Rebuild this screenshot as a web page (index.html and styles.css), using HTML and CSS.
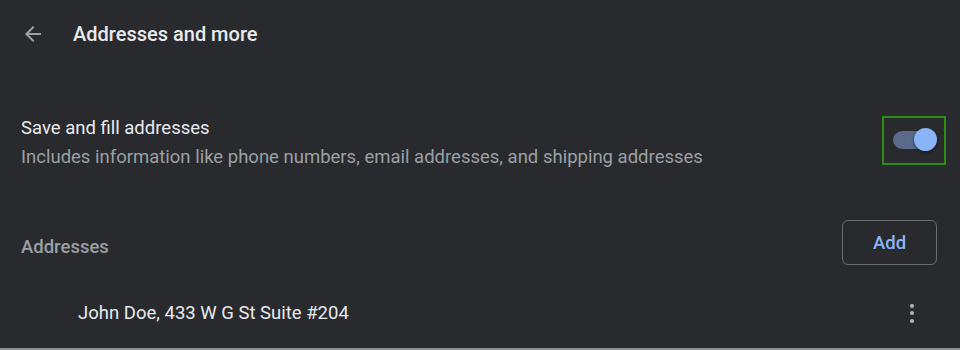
FILE: index.html
```html
<html><head><title>Addresses and more</title>
<link rel="stylesheet" href="styles.css">
</head>
<body>
  <div class="page">
    <div class="header">
      <div class="back-btn">
        <svg width="24" height="24" viewBox="0 0 24 24"><path d="M20 11H7.83l5.59-5.59L12 4l-8 8 8 8 1.41-1.41L7.83 13H20v-2z" fill="#9aa0a6"/></svg>
      </div>
      <h1>Addresses and more</h1>
    </div>

    <div class="setting-row">
      <div class="setting-text">
        <div class="setting-label">Save and fill addresses</div>
        <div class="setting-sub">Includes information like phone numbers, email addresses, and shipping addresses</div>
      </div>
      <div class="toggle-focus">
        <div class="toggle">
          <div class="toggle-bar"></div>
          <div class="toggle-knob"></div>
        </div>
      </div>
    </div>

    <div class="section-head">
      <h2>Addresses</h2>
      <button class="add-btn">Add</button>
    </div>

    <div class="address-row">
      <div class="address-text">John Doe, 433 W G St Suite #204</div>
      <div class="more-btn">
        <span class="dot"></span>
        <span class="dot"></span>
        <span class="dot"></span>
      </div>
    </div>
  </div>
  <div class="bottom-edge"></div>
</body>
</html>
```

FILE: styles.css
```css
  body, html {
    margin: 0;
    padding: 0;
    font-family: Roboto, 'Liberation Sans', sans-serif;
    background: #292a2d;
    color: #e8eaed;
    height: 100%;
    overflow: hidden;
  }
  .page {
    height: 348px;
    display: flex;
    flex-direction: column;
  }
  .header {
    display: flex;
    align-items: center;
    height: 68px;
    padding-left: 21px;
  }
  .back-btn {
    width: 24px;
    height: 24px;
    margin-right: 28px;
  }
  .back-btn svg {
    display: block;
  }
  h1 {
    margin: 0;
    font-size: 20px;
    font-weight: 500;
    color: #e8eaed;
  }
  .setting-row {
    display: flex;
    align-items: center;
    justify-content: space-between;
    margin-top: 47px;
    padding: 0 14px 0 21px;
  }
  .setting-label {
    font-size: 18.5px;
    line-height: 26px;
  }
  .setting-sub {
    font-size: 18.5px;
    line-height: 26px;
    color: #9aa0a6;
    margin-top: 3px;
  }
  .toggle-focus {
    width: 60px;
    height: 45px;
    border: 2px solid #2e8b14;
    display: flex;
    align-items: center;
    justify-content: center;
    margin-top: -4px;
  }
  .toggle {
    position: relative;
    width: 46px;
    height: 24px;
  }
  .toggle-bar {
    position: absolute;
    left: 2px;
    top: 2px;
    width: 36px;
    height: 18px;
    border-radius: 9px;
    background: #5a6a8b;
  }
  .toggle-knob {
    position: absolute;
    right: 0;
    top: -1px;
    width: 23px;
    height: 23px;
    border-radius: 50%;
    background: #8ab4f8;
    box-shadow: 0 1px 3px rgba(0, 0, 0, 0.6);
  }
  .section-head {
    display: flex;
    align-items: center;
    justify-content: space-between;
    margin-top: 50px;
    padding: 0 23px 0 21px;
  }
  h2 {
    margin: 0;
    padding-top: 8px;
    font-size: 18.5px;
    font-weight: 500;
    color: #9aa0a6;
  }
  .add-btn {
    width: 95px;
    height: 45px;
    background: transparent;
    border: 1px solid #6a6d72;
    border-radius: 6px;
    color: #8ab4f8;
    font-family: Roboto, 'Liberation Sans', sans-serif;
    font-size: 18.5px;
    font-weight: 500;
  }
  .address-row {
    display: flex;
    align-items: center;
    justify-content: space-between;
    height: 52px;
    margin-top: 22px;
    padding: 0 46px 0 78px;
  }
  .address-text {
    font-size: 18.5px;
  }
  .more-btn {
    display: flex;
    flex-direction: column;
    gap: 3.5px;
  }
  .dot {
    width: 4px;
    height: 4px;
    border-radius: 50%;
    background: #b5b8bc;
  }
  .bottom-edge {
    height: 2px;
    background: #8d8e91;
  }
```
